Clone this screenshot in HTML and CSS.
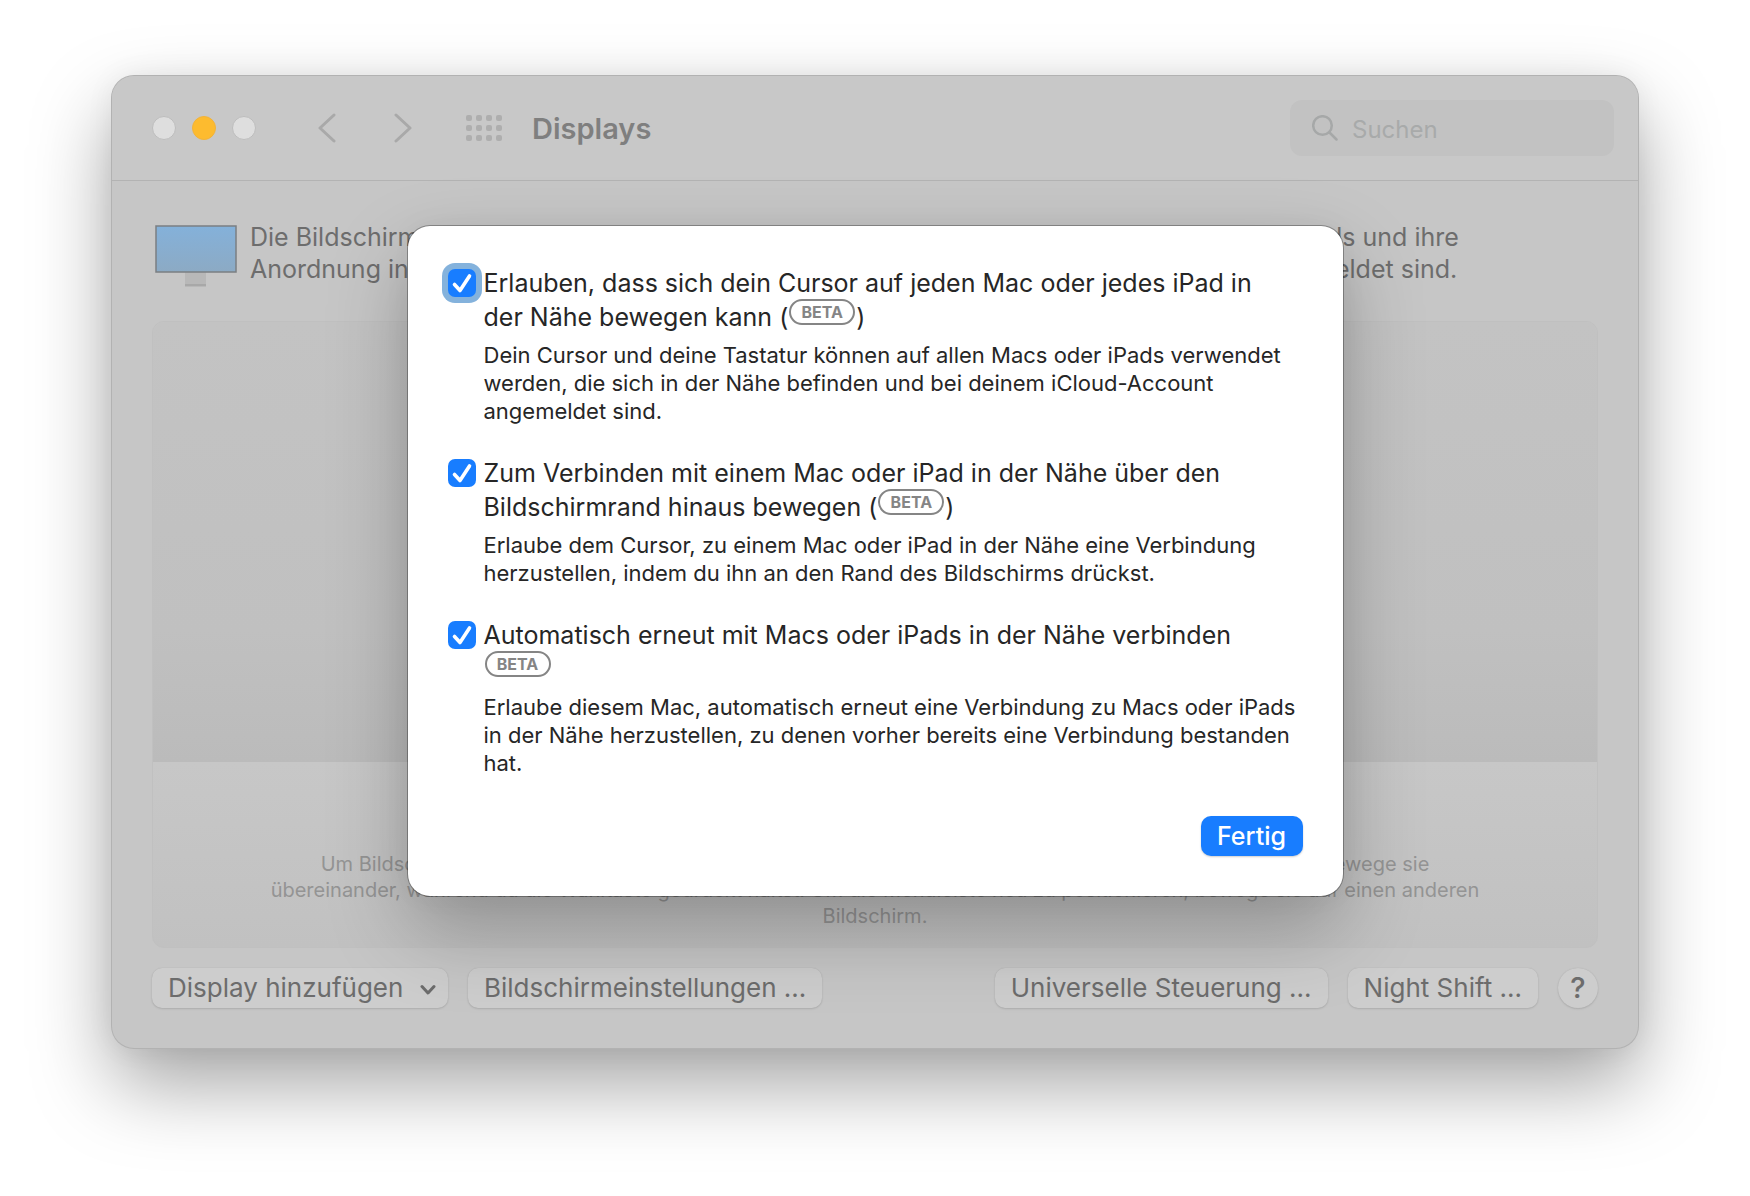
FILE: index.html
```html
<!DOCTYPE html>
<html lang="de">
<head>
<meta charset="utf-8">
<title>Displays</title>
<meta name="viewport" content="width=device-width, initial-scale=1">
<link rel="stylesheet" href="styles.css">
</head>
<body>
<main class="window">
  <header class="titlebar">
    <div class="lights">
      <button class="light" aria-label="Schließen"></button>
      <button class="light light-min" aria-label="Minimieren"></button>
      <button class="light" aria-label="Zoomen"></button>
    </div>
    <nav class="nav">
      <button class="icon-button" aria-label="Zurück"><svg width="18" height="30" viewBox="0 0 18 30"><path d="M16 2 2 15l14 13"/></svg></button>
      <button class="icon-button" aria-label="Vorwärts"><svg width="18" height="30" viewBox="0 0 18 30"><path d="M2 2l14 13L2 28"/></svg></button>
    </nav>
    <button class="icon-button" aria-label="Alle einblenden">
      <svg class="grid-icon" width="36" height="26" viewBox="0 0 36 26">
        <g id="dots"><rect x="0" y="0" width="6" height="6" rx="2"/><rect x="10" y="0" width="6" height="6" rx="2"/><rect x="20" y="0" width="6" height="6" rx="2"/><rect x="30" y="0" width="6" height="6" rx="2"/></g>
        <use href="#dots" y="10"/><use href="#dots" y="20"/>
      </svg>
    </button>
    <h1 class="title">Displays</h1>
    <label class="search">
      <svg width="26" height="26" viewBox="0 0 26 26"><circle cx="10.5" cy="10.5" r="9.3"/><path d="M17.5 17.5 24.5 24.5"/></svg>
      <input class="search-input" type="search" placeholder="Suchen" aria-label="Suchen">
    </label>
  </header>

  <section class="content">
    <div class="intro">
      <svg class="monitor" width="82" height="62" viewBox="0 0 82 62" aria-hidden="true">
        <defs><linearGradient id="screen" x1="0" y1="0" x2="0" y2="1"><stop offset="0" stop-color="#84b1da"/><stop offset="1" stop-color="#8caac4"/></linearGradient></defs>
        <rect x="30" y="46" width="21" height="16" fill="#b8b8b8"/>
        <rect x="30" y="59" width="21" height="2" fill="#a8a8a8"/>
        <rect x="1" y="1" width="80" height="46" fill="url(#screen)" stroke="#7b7f82" stroke-width="1.5"/>
      </svg>
      <p class="intro-text">Die Bildschirmeinstellungen listen die mit diesem Mac verbundenen Displays, Macs und iPads und ihre<br>Anordnung in der Nähe sowie alle weiteren Geräte, die unter deinem iCloud-Account angemeldet sind.</p>
    </div>
    <div class="arrangement">
      <div class="canvas"></div>
      <p class="hint">Um Bildschirme anzuordnen, bewege sie in die gewünschte Position. Um Bildschirme zu synchronisieren, bewege sie<br>übereinander, während du die Wahltaste gedrückt hältst. Um die Menüleiste neu zu positionieren, bewege sie auf einen anderen<br>Bildschirm.</p>
    </div>
    <footer class="actions">
      <span class="picker">
        <select class="push picker-select" aria-label="Display hinzufügen"><option>Display hinzufügen</option></select>
        <svg class="picker-arrow" width="16" height="12" viewBox="0 0 16 12"><path d="M2 2.500l6 6.500 6-6.500"/></svg>
      </span>
      <button class="push">Bildschirmeinstellungen ...</button>
      <span class="spacer"></span>
      <button class="push">Universelle Steuerung ...</button>
      <button class="push">Night Shift ...</button>
      <button class="push help" aria-label="Hilfe">?</button>
    </footer>
  </section>

  <dialog class="sheet" open aria-label="Universelle Steuerung">
    <form class="options" method="dialog">
      <div class="option">
        <input class="check check-focused" type="checkbox" id="cursor" checked>
        <div>
          <label class="option-title" for="cursor">Erlauben, dass sich dein Cursor auf jeden Mac oder jedes iPad in<br>der Nähe bewegen kann (<span class="beta">BETA</span>)</label>
          <p class="option-text">Dein Cursor und deine Tastatur können auf allen Macs oder iPads verwendet werden, die sich in der Nähe befinden und bei deinem iCloud-Account angemeldet sind.</p>
        </div>
      </div>
      <div class="option">
        <input class="check" type="checkbox" id="edge" checked>
        <div>
          <label class="option-title" for="edge">Zum Verbinden mit einem Mac oder iPad in der Nähe über den Bildschirmrand hinaus bewegen (<span class="beta">BETA</span>)</label>
          <p class="option-text">Erlaube dem Cursor, zu einem Mac oder iPad in der Nähe eine Verbindung herzustellen, indem du ihn an den Rand des Bildschirms drückst.</p>
        </div>
      </div>
      <div class="option">
        <input class="check" type="checkbox" id="reconnect" checked>
        <div>
          <label class="option-title" for="reconnect">Automatisch erneut mit Macs oder iPads in der Nähe verbinden<br><span class="beta">BETA</span></label>
          <p class="option-text">Erlaube diesem Mac, automatisch erneut eine Verbindung zu Macs oder iPads in der Nähe herzustellen, zu denen vorher bereits eine Verbindung bestanden hat.</p>
        </div>
      </div>
      <button class="done">Fertig</button>
    </form>
  </dialog>
</main>
</body>
</html>
```
FILE: styles.css
```css
* { box-sizing: border-box; }

body {
  margin: 0;
  padding: 76px 112px 148px;
  background: #fff;
  font-family: Inter, "Liberation Sans", sans-serif;
  font-size: 25px;
  color: #262626;
}

h1, p { margin: 0; }
button, input, select { font: inherit; }

.window {
  position: relative;
  border-radius: 22px;
  background: #c6c6c6;
  box-shadow:
    0 0 0 1px #b2b2b2,
    0 0 30px rgba(0, 0, 0, 0.06),
    0 36px 80px rgba(0, 0, 0, 0.36);
}

/* Title bar */
.titlebar {
  display: flex;
  align-items: center;
  height: 105px;
  padding: 0 24px 0 40px;
  border-bottom: 1px solid #b3b3b3;
  border-radius: 22px 22px 0 0;
  background: #c8c8c8;
}

.lights { display: flex; gap: 16px; }
.light {
  width: 24px;
  height: 24px;
  padding: 0;
  border: 1px solid #bdbdbd;
  border-radius: 50%;
  background: #dedede;
}
.light-min { border-color: #f2b33a; background: #fdbb2f; }

.nav { display: flex; gap: 58px; margin: 0 54px 0 62px; }
.icon-button {
  display: flex;
  padding: 0;
  border: 0;
  background: none;
}
.icon-button path {
  fill: none;
  stroke: #a9a9a9;
  stroke-width: 3;
  stroke-linecap: round;
  stroke-linejoin: round;
}
.grid-icon { fill: #aeaeae; }

.title {
  margin-left: 30px;
  font-size: 29px;
  font-weight: 600;
  color: #7f7f7f;
}

.search {
  display: flex;
  align-items: center;
  gap: 14px;
  width: 324px;
  height: 56px;
  margin-left: auto;
  padding: 0 22px;
  border-radius: 12px;
  background: #c2c2c2;
}
.search svg {
  flex: none;
  fill: none;
  stroke: #a6a8a8;
  stroke-width: 2.500;
  stroke-linecap: round;
}
.search-input {
  width: 100%;
  min-width: 0;
  padding: 3px 0 0;
  border: 0;
  outline: 0;
  background: none;
  font-size: 24px;
}
.search-input::placeholder { color: #a8aaaa; }

/* Window content behind the sheet */
.content { padding: 40px; }

.intro {
  display: flex;
  gap: 13px;
  padding: 0 3px;
  line-height: 32px;
  color: #6d6d6d;
}
.monitor { flex: none; margin: 4px 0 -4px; }
.intro-text { white-space: nowrap; }

.arrangement {
  margin: 36px 0 20px;
  border: 1px solid #c0c0c0;
  border-radius: 12px;
  background: linear-gradient(#c7c7c7 440px, #c1c1c1);
  overflow: hidden;
}
.canvas {
  height: 440px;
  background: linear-gradient(#c3c3c3, #c0c0c0 70%, #bbb);
}
.hint {
  padding: 89px 0 18px;
  font-size: 20px;
  line-height: 26px;
  text-align: center;
  white-space: nowrap;
  color: #949494;
}

.actions { display: flex; gap: 20px; }
.spacer { flex: 1; }
.push {
  height: 40px;
  padding: 0 16px;
  border: 0;
  border-radius: 10px;
  background: #cdcdcd;
  box-shadow: 0 0 1px #a8a8a8, 0 1px 2px #adadad;
  font-size: 26px;
  line-height: 38px;
  color: #6c6c6c;
}
.picker { position: relative; }
.picker-select {
  width: 296px;
  appearance: none;
}
.picker-arrow {
  position: absolute;
  top: 16px;
  right: 12px;
  fill: none;
  stroke: #6c6c6c;
  stroke-width: 3;
  stroke-linecap: round;
  stroke-linejoin: round;
  pointer-events: none;
}
.help {
  width: 40px;
  padding: 0;
  border-radius: 50%;
  font-size: 29px;
  font-weight: 500;
}

/* Sheet */
.sheet {
  position: absolute;
  top: 150px;
  width: 935px;
  max-width: 100%;
  margin: 0 auto;
  padding: 40px;
  border: 0;
  border-radius: 22px;
  background: #fff;
  color: inherit;
  box-shadow:
    0 0 0 1px rgba(0, 0, 0, 0.3),
    0 0 30px rgba(0, 0, 0, 0.04),
    0 34px 80px rgba(0, 0, 0, 0.26);
}
.options {
  display: flex;
  flex-direction: column;
  gap: 31px;
}
.option {
  display: grid;
  grid-template-columns: 28px 1fr;
  gap: 8px;
}
.check {
  width: 28px;
  height: 28px;
  margin: 3px 0 0;
  border-radius: 7px;
  appearance: none;
  background: #187dff url("data:image/svg+xml,%3Csvg xmlns='http://www.w3.org/2000/svg' viewBox='0 0 28 28'%3E%3Cpath d='M6.500 15.500l5.500 6L21.500 7' fill='none' stroke='%23fff' stroke-width='3.600' stroke-linecap='round' stroke-linejoin='round'/%3E%3C/svg%3E");
}
.check-focused { box-shadow: 0 0 0 6px #84b2dc; }
.option-title { display: block; line-height: 34px; }
.option-text {
  margin-top: 7px;
  font-size: 22px;
  line-height: 28px;
}
.beta {
  display: inline-block;
  width: 66px;
  height: 26px;
  margin: -2px 1px 0;
  border: 2px solid #858585;
  border-radius: 13px;
  vertical-align: 8px;
  font-size: 16px;
  font-weight: 700;
  line-height: 22px;
  text-align: center;
  color: #858585;
}
.done {
  align-self: flex-end;
  width: 102px;
  height: 40px;
  margin-top: 8px;
  padding: 0;
  border: 0;
  border-radius: 10px;
  background: #187dff;
  box-shadow: 0 1px 2px rgba(0, 0, 0, 0.2);
  font-weight: 500;
  line-height: 38px;
  color: #fff;
}
```
